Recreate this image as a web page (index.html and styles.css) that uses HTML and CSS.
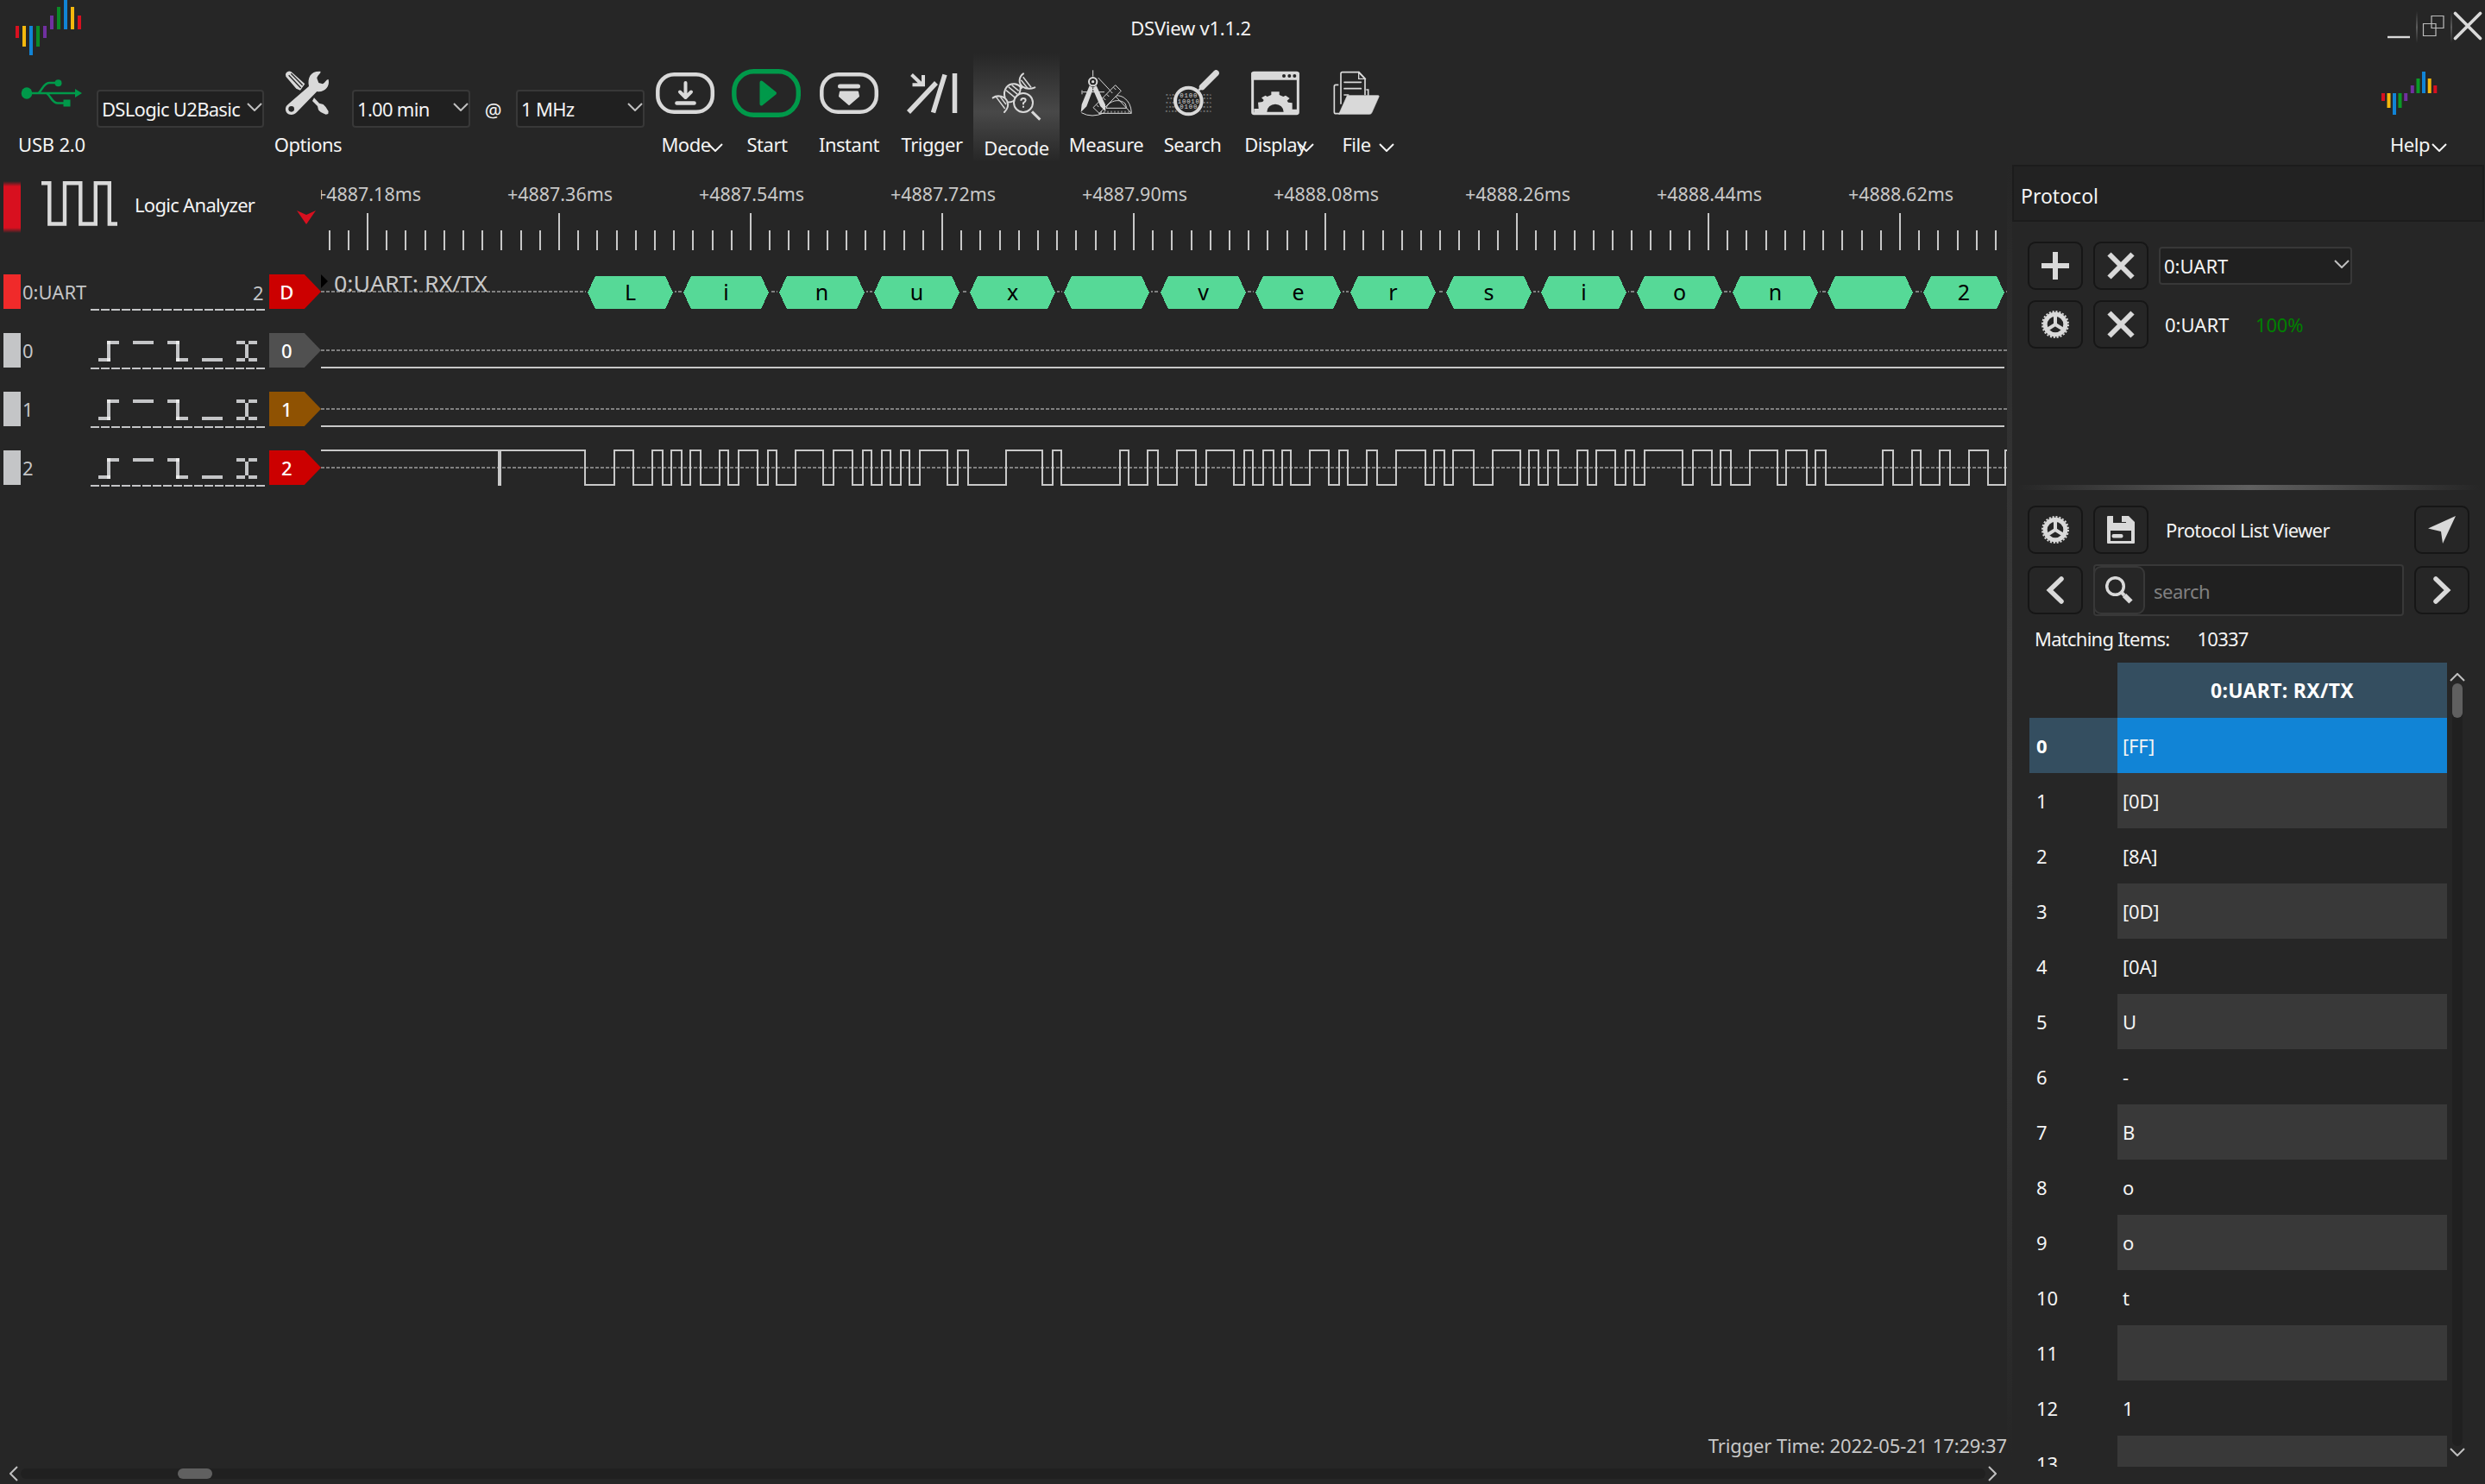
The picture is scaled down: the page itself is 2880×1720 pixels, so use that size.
FILE: index.html
```html
<!DOCTYPE html>
<html lang="en">
<head>
<meta charset="utf-8">
<title>DSView v1.1.2</title>
<link rel="stylesheet" href="styles.css">
</head>
<body>
<header class="titlebar">
  <svg class="app-logo" width="100" height="66" viewBox="0 0 100 66" shape-rendering="crispEdges">
    <path fill="#d8101f" d="M18 30h4v14h-4zM90 18h4v16h-4z"/>
    <path fill="#f5b80d" d="M26 30h4v24h-4zM82 8h4v26h-4z"/>
    <path fill="#1184d6" d="M34 30h4v34h-4zM74 0h4v34h-4z"/>
    <path fill="#0a8a26" d="M42 30h4v24h-4zM66 8h4v26h-4z"/>
    <path fill="#7030a0" d="M50 30h4v14h-4zM58 18h4v16h-4z"/>
  </svg>
  <h1 class="title">DSView v1.1.2</h1>
  <div class="window-controls">
    <svg width="120" height="60" viewBox="2760 0 120 60" fill="none" stroke="#d9d9d9">
      <defs><linearGradient id="sep" x1="0" y1="0" x2="0" y2="1"><stop offset="0" stop-color="#262626"/><stop offset=".5" stop-color="#5c5c5c"/><stop offset="1" stop-color="#262626"/></linearGradient></defs>
      <path d="M2767 43h26" stroke-width="2.4"/>
      <path d="M2808.500 27.500h14.500v14h-14.500zM2818 18.500h14v14h-14z" stroke="#bdbdbd" stroke-width="1.200"/>
      <path d="M2845.500 15.500l29 29M2874.500 15.500l-29 29" stroke-width="3.800" stroke-linecap="round"/>
      <path d="M2800 13h2v37h-2zM2840 13h2v37h-2z" fill="url(#sep)" stroke="none"/>
    </svg>
  </div>
</header>

<nav class="toolbar">
  <div class="tool tool-usb">
    <svg width="104" height="72" viewBox="8 72 104 72" fill="none" stroke="#00994a" stroke-width="2.600">
      <ellipse cx="31" cy="108" rx="6.300" ry="6.700" fill="#00994a" stroke="none"/>
      <path d="M31 108H90M44 108C48 107 50 96 57 96H66M54 108C60 112 60 119.500 67 119.500H75"/>
      <path d="M87 103l8 5-8 5zM73.500 115.500h8v8h-8z" fill="#00994a" stroke="none"/>
      <circle cx="67.500" cy="96.300" r="4" fill="#00994a" stroke="none"/>
    </svg>
    <span>USB 2.0</span>
  </div>
  <div class="combo combo-device"><span>DSLogic U2Basic</span><svg class="arrow" width="18" height="10" viewBox="0 0 18 10"><path d="M1 1l8 8 8-8"/></svg></div>
  <div class="tool tool-options">
    <svg width="102" height="72" viewBox="18 6 306 216" fill="#d9d9d9">
      <path d="M96 42q10-10 22 2l42 38-16 22-14-6-36-42q-4-8 2-14z"/>
      <path d="M104 52l42 44M112 46l40 40" stroke="#262626" stroke-width="4"/>
      <path d="M174 90C168 60 180 36 214 38C218 44 202 52 202 62L208 78L222 82C232 76 234 66 242 66C248 92 228 112 202 108L132 180C118 196 90 190 93 166Q94 158 102 152Z"/>
      <circle cx="113" cy="169" r="10" fill="#262626"/>
      <path d="M192 130l18 19 14 4q10 8 18 24l-1 9-8 2q-22-8-26-16l-3-13-18-18z"/>
    </svg>
    <span>Options</span>
  </div>
  <div class="combo combo-duration"><span>1.00 min</span><svg class="arrow" width="18" height="10" viewBox="0 0 18 10"><path d="M1 1l8 8 8-8"/></svg></div>
  <span class="at">@</span>
  <div class="combo combo-rate"><span>1 MHz</span><svg class="arrow" width="18" height="10" viewBox="0 0 18 10"><path d="M1 1l8 8 8-8"/></svg></div>
  <div class="tool tool-mode">
    <svg width="94" height="72" viewBox="747 72 94 72" fill="none" stroke="#d9d9d9">
      <rect x="762.300" y="86.300" width="63.500" height="43.500" rx="19" stroke-width="4.500"/>
      <path d="M794.500 96v16M788 106.500l6.500 6.500 6.500-6.500" stroke-width="4" stroke-linecap="round" stroke-linejoin="round"/>
      <path d="M784.500 119.500h20" stroke-width="4.600" stroke-linecap="round"/>
    </svg>
    <span>Mode</span>
    <svg class="arrow arrow-menu" width="18" height="10" viewBox="0 0 18 10"><path d="M1 1l8 8 8-8"/></svg>
  </div>
  <div class="tool tool-start">
    <svg width="94" height="72" viewBox="841 72 94 72">
      <rect x="850.800" y="82.800" width="74.500" height="50.500" rx="23" fill="none" stroke="#00994a" stroke-width="5.400"/>
      <path d="M882.500 95.500l15.500 12.500-15.500 12.500z" fill="#00994a" stroke="#00994a" stroke-width="4" stroke-linejoin="round"/>
    </svg>
    <span>Start</span>
  </div>
  <div class="tool tool-instant">
    <svg width="98" height="72" viewBox="935 72 98 72" fill="#d9d9d9">
      <rect x="952.300" y="86.300" width="63.500" height="43.500" rx="19" fill="none" stroke="#d9d9d9" stroke-width="4.500"/>
      <rect x="971" y="97.500" width="26" height="5" rx="2.500"/>
      <path d="M974 106.500h20l1 5-11 9.500-11-9.500z" stroke="#d9d9d9" stroke-width="2" stroke-linejoin="round"/>
    </svg>
    <span>Instant</span>
  </div>
  <div class="tool tool-trigger">
    <svg width="94" height="72" viewBox="1033 72 94 72" fill="none" stroke="#d9d9d9">
      <path d="M1056.500 86.500l12 11.500M1057.500 98.300h12.500V87" stroke-width="4"/>
      <path d="M1053 130l32-34M1081.500 130.500l13.500-44M1106.500 85v46" stroke-width="5.500"/>
    </svg>
    <span>Trigger</span>
  </div>
  <div class="tool tool-decode">
    <svg width="100" height="72" viewBox="24 48 300 216" fill="none" stroke="#d9d9d9" stroke-width="6">
      <path d="M92 160C110 148 134 156 142 172Q150 192 132 210M134 160C126 130 144 110 168 112Q182 114 192 126M142 176Q172 176 182 150Q190 134 188 112M198 76C184 86 178 108 196 122Q214 134 238 124" stroke-linecap="round"/>
      <path d="M104 158l30 40M118 157l20 26M138 134l32 26M146 122l32 26M158 116l24 20M190 98l24 30M197 88l28 36" stroke-width="4.500"/>
      <circle cx="198" cy="177" r="33" fill="#3c3c3c"/>
      <path d="M190 170q0-8 8-8t8 7q0 5-8 9v6M198 188v6" stroke-width="6"/>
      <path d="M228 208l28 28" stroke-width="9"/>
    </svg>
    <span>Decode</span>
  </div>
  <div class="tool tool-measure">
    <svg width="108" height="72" viewBox="324 36 324 216" fill="none" stroke="#d9d9d9" stroke-width="3">
      <path d="M458 90L574 214H460M468 214C470 160 520 140 548 160Q572 176 574 212M486 196C494 172 530 160 552 180Q556 188 556 196ZM440 64v22"/>
      <path d="M480 212v-6M492 212v-6M504 212v-6M516 212v-6M528 212v-6M540 212v-6M552 212v-6M564 212v-6" stroke-width="2.500"/>
      <path d="M518 116L538 136L462 214L441 194Z" fill="#262626"/>
      <path d="M512 124l8 8M500 136l8 8M488 148l8 8M476 160l8 8M464 172l8 8M452 184l8 8" />
      <path d="M400 212Q436 232 480 212M402 134v14M404 140h76"/>
      <circle cx="440" cy="104" r="14" stroke-width="6"/>
      <circle cx="440" cy="104" r="5" fill="#d9d9d9" stroke="none"/>
      <path d="M428 118l14 8-24 64-20 20 3-27zM452 118l-14 8 28 64 18 18-1-24z" fill="#d9d9d9" stroke="none"/>
    </svg>
    <span>Measure</span>
  </div>
  <div class="tool tool-search">
    <svg width="92" height="72" viewBox="648 36 276 216">
      <g class="bits">
        <text x="694" y="153" textLength="158">010010100101001</text>
        <text x="698" y="165" textLength="154">001001010010010</text>
        <text x="694" y="180" textLength="158">010010100101001</text>
        <text x="694" y="195" textLength="158">100100101001010</text>
        <text x="692" y="209" textLength="160">010010100101001</text>
      </g>
      <circle cx="772" cy="171" r="46" fill="#262626" stroke="#d9d9d9" stroke-width="12"/>
      <g class="bits bits-lens">
        <text x="742" y="159" textLength="60">0100</text>
        <text x="734" y="179" textLength="76">10010</text>
        <text x="742" y="199" textLength="60">0100</text>
      </g>
      <path d="M808 134l10-10" stroke="#d9d9d9" stroke-width="8"/>
      <path d="M820 122l48-48" stroke="#d9d9d9" stroke-width="21" stroke-linecap="round"/>
    </svg>
    <span>Search</span>
  </div>
  <div class="tool tool-display">
    <svg width="100" height="72" viewBox="924 36 300 216">
      <rect x="995" y="73" width="158" height="142" rx="5" fill="none" stroke="#d9d9d9" stroke-width="9"/>
      <path d="M991 72h166v26H991z" fill="#d9d9d9"/>
      <circle cx="1104" cy="84" r="6" fill="#262626"/><circle cx="1123" cy="84" r="6" fill="#262626"/><circle cx="1141" cy="84" r="6" fill="#262626"/>
      <path d="M1000 198h16l-2-22 16-2 4-6-8-8 14-8 6 4 14-6V139h28v11l14 6 8-4 14 10-9 8 4 6 14 2v22h16v16H1000z" fill="#d9d9d9"/>
      <path d="M1045 209a29 27 0 0 1 58 0z" fill="#262626"/>
    </svg>
    <span>Display</span>
    <svg class="arrow arrow-menu" width="18" height="10" viewBox="0 0 18 10"><path d="M1 1l8 8 8-8"/></svg>
  </div>
  <div class="tool tool-file">
    <svg width="88" height="72" viewBox="1224 36 264 216" fill="none" stroke="#d9d9d9" stroke-width="5">
      <path d="M1294 115h-10q-5 0-5 6v88q0 6 6 6h14M1390 132h7v20"/>
      <path d="M1302 182V76q0-5 5-5h58l21 22v58"/>
      <path d="M1364 72v22h22z" stroke-width="4"/>
      <path d="M1314 106h58M1314 128h58M1314 150h14" stroke-linecap="round"/>
      <path d="M1324 152h108q4 0 2 5l-24 54q-2 6-8 6H1295z" fill="#d9d9d9" stroke-width="2"/>
    </svg>
    <span>File</span>
    <svg class="arrow arrow-menu" width="18" height="10" viewBox="0 0 18 10"><path d="M1 1l8 8 8-8"/></svg>
  </div>
  <div class="tool tool-help">
    <svg width="110" height="72" viewBox="2738 72 110 72" stroke-width="4">
      <path stroke="#d8101f" d="M2762 108v9M2822.300 99v9"/>
      <path stroke="#f5b80d" d="M2768.500 108v17M2815.700 91v17"/>
      <path stroke="#1184d6" d="M2775 108v25M2809 83v25"/>
      <path stroke="#0a9a26" d="M2781.500 108v17M2802.500 91v17"/>
      <path stroke="#7030a0" d="M2788.200 108v9M2795.800 99v9"/>
    </svg>
    <span>Help</span>
    <svg class="arrow arrow-menu" width="18" height="10" viewBox="0 0 18 10"><path d="M1 1l8 8 8-8"/></svg>
  </div>
</nav>

<div class="workspace">
  <main class="view">
    <div class="scope">
      <div class="headers">
        <div class="device-row">
          <i class="device-mark"></i>
          <svg class="device-icon" width="88" height="56" viewBox="48 208 88 56" fill="none" stroke="#d9d9d9" stroke-width="4.400"><path d="M48 212.300H57.300V259.500H75V212.300H93.300V259.500H110.800V212.300H126.800V259.500H136"/></svg>
          <span class="device-name">Logic Analyzer</span>
          <svg class="trigger-mark" width="22" height="16" viewBox="0 0 22 16"><path fill="#d8101f" d="M0 0l11 5 11-5-11 16z"/></svg>
        </div>
        <div class="channel">
          <i class="swatch swatch-decode"></i><span class="name">0:UART</span>
          <div class="triggers"><span class="source">2</span></div>
          <b class="badge badge-red">D</b>
        </div>
        <div class="channel">
          <i class="swatch"></i><span class="name">0</span>
          <div class="triggers"><svg width="202" height="24" viewBox="105 394 202 24"><use href="#edges"/></svg></div>
          <b class="badge badge-grey">0</b>
        </div>
        <div class="channel">
          <i class="swatch"></i><span class="name">1</span>
          <div class="triggers"><svg width="202" height="24" viewBox="105 394 202 24"><use href="#edges"/></svg></div>
          <b class="badge badge-brown">1</b>
        </div>
        <div class="channel">
          <i class="swatch"></i><span class="name">2</span>
          <div class="triggers"><svg width="202" height="24" viewBox="105 394 202 24">
            <g id="edges" fill="#c4c5c7" shape-rendering="crispEdges">
              <path d="M114 414h14v4h-14zM124 394h4v24h-4zM124 394h14v4h-14zM154 394h24v4h-24zM194 394h14v4h-14zM204 394h4v24h-4zM204 414h14v4h-14zM234 414h24v4h-24zM274 394h10v4h-10zM288 394h10v4h-10zM274 414h10v4h-10zM288 414h10v4h-10zM284 398h4v16h-4z"/>
              <path fill="#ebebeb" d="M124 394h4v4h-4zM124 414h4v4h-4zM204 394h4v4h-4zM204 414h4v4h-4z"/>
            </g></svg></div>
          <b class="badge badge-red">2</b>
        </div>
      </div>
      <svg id="plot" class="plot" width="1954" height="1462" viewBox="372 190 1954 1462"></svg>
    </div>
    <p class="trigger-time">Trigger Time: 2022-05-21 17:29:37</p>
    <div class="hscroll">
      <svg class="arrow" width="10" height="18" viewBox="0 0 10 18"><path d="M9 1L1 9l8 8"/></svg>
      <div class="track"><i class="thumb"></i></div>
      <svg class="arrow" width="10" height="18" viewBox="0 0 10 18"><path d="M1 1l8 8-8 8"/></svg>
    </div>
  </main>
  <div class="vsplit"></div>
  <aside class="dock">
    <h2 class="dock-title">Protocol</h2>
    <section class="decoders">
      <div class="row">
        <button class="btn"><svg width="32" height="32" viewBox="0 0 32 32"><path d="M13 0h6v13h13v6H19v13h-6V19H0v-6h13z"/></svg></button>
        <button class="btn"><svg width="32" height="32" viewBox="0 0 32 32"><path class="line" d="M2.500 2.500l27 27M29.500 2.500l-27 27" stroke-width="6"/></svg></button>
        <div class="combo combo-decoder"><span>0:UART</span><svg class="arrow" width="18" height="10" viewBox="0 0 18 10"><path d="M1 1l8 8 8-8"/></svg></div>
      </div>
      <div class="row">
        <button class="btn"><svg width="32" height="32" viewBox="0 0 32 32"><g id="gear"><circle class="line" cx="16" cy="16" r="15" stroke-width="2" stroke-dasharray="2.100 1.827"/><circle class="line" cx="16" cy="16" r="11.800" stroke-width="5"/><path class="line" d="M16 5v11l-9.500 6M16 16l9.500 6" stroke-width="4"/></g></svg></button>
        <button class="btn"><svg width="32" height="32" viewBox="0 0 32 32"><path class="line" d="M2.500 2.500l27 27M29.500 2.500l-27 27" stroke-width="6"/></svg></button>
        <span class="decoder-name">0:UART</span><span class="progress">100%</span>
      </div>
    </section>
    <div class="hsplit"></div>
    <section class="list-viewer">
      <div class="row">
        <button class="btn"><svg width="32" height="32" viewBox="0 0 32 32"><use href="#gear"/></svg></button>
        <button class="btn"><svg width="32" height="32" viewBox="0 0 32 32"><path fill-rule="evenodd" d="M0 1q0-1 1-1h6v8h15V0h3l7 7v24q0 1-1 1H1q-1 0-1-1zM4 17v12h24V17zM17 0h5v7h-5z"/><rect x="5.500" y="21" width="13" height="4.500" rx="2"/></svg></button>
        <span class="viewer-title">Protocol List Viewer</span>
        <button class="btn btn-end"><svg width="32" height="32" viewBox="0 0 32 32"><path d="M32 0L17 32 15 18 0 14.500z"/></svg></button>
      </div>
      <div class="row">
        <button class="btn"><svg width="32" height="32" viewBox="0 0 32 32"><path class="line" d="M23 3L9.500 16 23 29" stroke-width="5.500" stroke-linecap="round"/></svg></button>
        <div class="search">
          <button class="btn btn-search"><svg width="32" height="32" viewBox="0 0 32 32"><circle class="line" cx="11.500" cy="11.500" r="9.800" stroke-width="3.500"/><path class="line" d="M19 19l3 3" stroke-width="4"/><path class="line" d="M22 22l7.500 7.500" stroke-width="6"/></svg></button>
          <span class="placeholder">search</span>
        </div>
        <button class="btn btn-end"><svg width="32" height="32" viewBox="0 0 32 32"><path class="line" d="M9 3l13.500 13L9 29" stroke-width="5.500" stroke-linecap="round"/></svg></button>
      </div>
      <p class="matching"><span>Matching Items:</span><span class="count">10337</span></p>
      <div class="list">
        <div class="grid">
          <span></span><b class="head">0:UART: RX/TX</b>
          <b class="idx idx-selected">0</b><span class="cell cell-selected">[FF]</span>
          <span class="idx">1</span><span class="cell alt">[0D]</span>
          <span class="idx">2</span><span class="cell">[8A]</span>
          <span class="idx">3</span><span class="cell alt">[0D]</span>
          <span class="idx">4</span><span class="cell">[0A]</span>
          <span class="idx">5</span><span class="cell alt">U</span>
          <span class="idx">6</span><span class="cell">-</span>
          <span class="idx">7</span><span class="cell alt">B</span>
          <span class="idx">8</span><span class="cell">o</span>
          <span class="idx">9</span><span class="cell alt">o</span>
          <span class="idx">10</span><span class="cell">t</span>
          <span class="idx">11</span><span class="cell alt"></span>
          <span class="idx">12</span><span class="cell">1</span>
          <span class="idx">13</span><span class="cell alt"></span>
        </div>
        <div class="vscroll">
          <svg class="arrow" width="18" height="10" viewBox="0 0 18 10"><path d="M1 9l8-8 8 8"/></svg>
          <div class="track"><i class="thumb"></i></div>
          <svg class="arrow" width="18" height="10" viewBox="0 0 18 10"><path d="M1 1l8 8 8-8"/></svg>
        </div>
      </div>
    </section>
  </aside>
</div>
<script src="app.js"></script>
</body>
</html>
```
FILE: styles.css
```css
* { box-sizing: border-box; }

body {
  margin: 0;
  width: 2880px;
  height: 1720px;
  overflow: hidden;
  display: flex;
  flex-direction: column;
  background: #262626;
  color: #f4f4f4;
  font: 22px/32px "Noto Sans", sans-serif;
  letter-spacing: -0.5px;
}

svg { display: block; flex: none; }
h1, h2, p { margin: 0; font-weight: 400; font-size: inherit; }
.arrow { fill: none; stroke: #c0c0c0; stroke-width: 2; }

/* title bar */
.titlebar { height: 60px; display: flex; justify-content: space-between; }
.app-logo { width: 100px; height: 66px; }
.title { margin-top: 16px; padding-right: 100px; letter-spacing: -0.25px; }

/* toolbar */
.toolbar { height: 130px; display: flex; padding-left: 8px; white-space: nowrap; }
.tool {
  display: grid;
  grid-template-rows: 72px 32px;
  row-gap: 7px;
  justify-items: center;
  align-content: start;
  padding-top: 12px;
  position: relative;
}
.tool-usb { width: 104px; letter-spacing: -0.2px; }
.tool-options { width: 102px; }
.tool-mode, .tool-start, .tool-trigger { width: 94px; }
.tool-mode span { padding-left: 2px; }
.tool-start span { padding-left: 2px; }
.tool-instant { width: 98px; }
.tool-decode {
  width: 100px;
  margin-left: 1px;
  padding-top: 16px;
  background: linear-gradient(#262626 2px, #484848 70px, #262626 128px);
}
.tool-measure { width: 108px; }
.tool-search { width: 92px; }
.tool-display { width: 100px; }
.tool-file { width: 88px; }
.tool-help { width: 110px; margin-left: auto; margin-right: 32px; }
.arrow-menu { position: absolute; top: 106px; stroke: #f4f4f4; }
.tool-mode .arrow-menu { left: 73px; }
.tool-display .arrow-menu { left: 77px; }
.tool-file .arrow-menu { left: 70px; }
.tool-help .arrow-menu { left: 80px; }
.at { width: 53px; text-align: center; margin-top: 51px; }

.combo {
  height: 44px;
  display: flex;
  align-items: center;
  justify-content: space-between;
  padding: 0 0 0 4px;
  border: 2px solid #383838;
  border-radius: 4px;
  background: #202020;
}
.combo .arrow { margin-top: -4px; }
.toolbar .combo { margin-top: 44px; letter-spacing: -0.7px; }
.combo-device { width: 194px; }
.combo-duration { width: 137px; }
.combo-rate { width: 149px; }
.combo-decoder { width: 224px; letter-spacing: 0; }
.combo-decoder .arrow { margin-right: 1px; }

/* workspace */
.workspace { flex: 1; display: flex; min-height: 0; }
.view { width: 2326px; display: flex; flex-direction: column; }
.scope { display: flex; height: 1462px; }
.headers { width: 372px; color: #c4c5c7; }

.device-row { height: 114px; display: flex; padding-left: 4px; color: #f4f4f4; }
.device-mark {
  width: 20px; height: 60px; margin-top: 20px;
  background: linear-gradient(#262626, #d8101f 6px, #d8101f 54px, #262626);
}
.device-icon { margin: 18px 0 0 24px; }
.device-name { margin: 31px 0 0 20px; width: 188px; letter-spacing: -0.7px; }
.trigger-mark { margin-top: 54px; }

.channel { height: 68px; display: flex; align-items: center; }
.swatch { width: 20px; height: 40px; margin-left: 4px; background: #c4c5c7; }
.swatch-decode { background: #f02a2a; }
.name { width: 81px; padding-left: 2px; letter-spacing: 0; }
.triggers {
  width: 202px; height: 42px; margin-top: 2px;
  display: flex; align-items: flex-start; justify-content: flex-end;
  padding-top: 9px;
  background: repeating-linear-gradient(90deg, #c4c5c7 0 10px, transparent 10px 12px) bottom / 100% 2px no-repeat;
}
.source { margin-top: -4px; padding-right: 2px; }
.badge {
  width: 60px; height: 40px; margin-left: 5px;
  padding-right: 20px;
  line-height: 40px;
  text-align: center;
  font-weight: 500;
  color: #fff;
  clip-path: polygon(0 0, 68% 0, 100% 50%, 68% 100%, 0 100%);
}
.badge-red { background: #cc0000; }
.badge-grey { background: #505050; }
.badge-brown { background: #8f5202; }

.plot { letter-spacing: 0; }
.ruler-label { fill: #c8c8c8; font-size: 22px; text-anchor: middle; }
.row-title { fill: #c8c8c8; font-size: 25px; }
.byte { fill: #000; font-size: 25px; text-anchor: middle; }
.bits { fill: #a8a8a8; font: 11px "Liberation Mono", monospace; letter-spacing: 0; }
.bits-lens { fill: #d9d9d9; font-size: 22px; }

.trigger-time { text-align: right; height: 32px; margin-top: 7px; color: #c8c8c8; letter-spacing: -0.13px; }
.hscroll { display: flex; align-items: center; gap: 3px; padding: 8px 12px 0 11px; }
.hscroll .track { flex: 1; height: 12px; border-radius: 6px; background: #202020; padding-left: 182px; }
.hscroll .thumb { display: block; width: 40px; height: 12px; border-radius: 6px; background: #606060; }

.vsplit { width: 6px; background: linear-gradient(#262626 0, #424242 50%, #262626 98%); }

/* protocol dock */
.dock { width: 548px; display: flex; flex-direction: column; }
.dock-title {
  width: 547px; height: 66px; margin-top: 1px;
  padding: 4px 0 0 8px;
  border: 2px solid #1c1c1c;
  background: #222;
  font-size: 23px;
  line-height: 60px;
  letter-spacing: 0;
}
.decoders { height: 305px; padding: 23px 18px 0; display: flex; flex-direction: column; gap: 12px; }
.row { display: flex; align-items: center; gap: 12px; }
.btn {
  width: 64px; height: 56px; padding: 0;
  display: grid; place-items: center;
  border: 2px solid #161616;
  border-radius: 9px;
  background: #262626;
}
.btn svg { fill: #d9d9d9; }
.line { fill: none; stroke: #d9d9d9; }
.btn-end { margin-left: auto; }
.decoder-name { width: 84px; padding-left: 7px; letter-spacing: 0; }
.progress { color: #008000; padding-left: 16px; letter-spacing: -0.2px; }
.hsplit { height: 6px; background: linear-gradient(90deg, #262626 1%, #606060 50%, #262626 99%); }

.list-viewer { flex: 1; padding: 18px 18px 0; display: flex; flex-direction: column; gap: 12px; }
.viewer-title { padding-left: 8px; letter-spacing: -0.65px; }
.search {
  width: 360px; height: 60px;
  display: flex; align-items: center;
  border: 2px solid #383838;
  border-radius: 4px;
  background: #202020;
}
.btn-search { width: 60px; border-color: #383838; margin-left: -2px; }
.placeholder { color: #808080; padding: 2px 0 0 10px; }
.matching { display: flex; gap: 32px; padding-left: 8px; margin-top: -2px; letter-spacing: -0.75px; }
.list { display: flex; height: 932px; }
.grid {
  width: 484px; margin-left: 2px;
  display: grid;
  grid-template-columns: 102px 382px;
  grid-auto-rows: 64px;
  line-height: 65px;
  letter-spacing: -0.2px;
  overflow: hidden;
}
.head { background: #344e60; text-align: center; color: #fff; font-size: 23px; line-height: 64px; letter-spacing: 0.3px; }
.idx { padding-left: 8px; }
.idx-selected { background: #344e60; color: #fff; }
.cell { padding-left: 6px; }
.alt { background: #393939; }
.cell-selected { background: #1184d6; }
.vscroll { display: flex; flex-direction: column; align-items: center; width: 18px; margin-left: 3px; padding: 12px 0; gap: 2px; }
.vscroll .track { flex: 1; width: 12px; border-radius: 6px; background: #202020; }
.vscroll .thumb { display: block; width: 12px; height: 40px; border-radius: 6px; background: #606060; }
```
FILE: app.js
```js
const SVG = 'http://www.w3.org/2000/svg';
const plot = document.getElementById('plot');

function add(name, attrs, text) {
  const el = document.createElementNS(SVG, name);
  for (const key in attrs) el.setAttribute(key, attrs[key]);
  if (text) el.textContent = text;
  plot.appendChild(el);
}

// time ruler
const labels = ['+4887.18ms', '+4887.36ms', '+4887.54ms', '+4887.72ms', '+4887.90ms',
  '+4888.08ms', '+4888.26ms', '+4888.44ms', '+4888.62ms'];
let ticks = '';
for (let i = -2; i <= 85; i++) {
  const x = Math.round(425 + i * 22.2);
  ticks += `M${x} ${i % 10 === 0 ? 247 : 267}h2V290h-2z`;
}
add('path', { d: ticks, fill: '#c8c8c8', 'shape-rendering': 'crispEdges' });
labels.forEach((t, i) => add('text', {
  class: 'ruler-label', x: 427 + i * 222, y: 232.5, textLength: 122, lengthAdjust: 'spacingAndGlyphs'
}, t));

// centre guides
for (const y of [338, 406, 474, 542]) {
  add('path', { d: `M372 ${y}H2326`, stroke: '#808080', 'stroke-width': 2, 'stroke-dasharray': '4 2' });
}

// decoded bytes
add('path', { d: 'M372 318l8 8-8 8z', fill: '#000' });
add('text', { class: 'row-title', x: 387, y: 337.5, textLength: 178, lengthAdjust: 'spacingAndGlyphs' }, '0:UART: RX/TX');
const bytes = 'Linux version 2';
const starts = [681, 792, 903, 1013, 1124, 1233, 1345, 1455, 1565, 1676, 1786, 1897, 2008, 2118, 2229];
starts.forEach((x, i) => {
  const end = Math.min(x + 99, 2323);
  add('path', { d: `M${x - 2} 335h${end - x + 4}v6H${x - 2}z`, fill: '#262626' });
  add('path', {
    d: `M${x} 339L${x + 9} 320H${end - 9}L${end} 339L${end - 9} 358H${x + 9}Z`,
    fill: '#56d997', 'shape-rendering': 'crispEdges'
  });
  if (bytes[i] !== ' ') add('text', { class: 'byte', x: (x + end) / 2, y: 347.5 }, bytes[i]);
});

// channels 0 and 1 stay low
for (const y of [426, 494]) add('path', { d: `M372 ${y}H2323`, stroke: '#c8c8c8', 'stroke-width': 2 });

// channel 2: x of every level change, starting high
const edges = [678, 712, 734, 756, 768, 778, 790, 800, 812, 834, 844, 856, 878, 890, 900, 922, 954, 966,
  988, 1000, 1010, 1022, 1032, 1044, 1054, 1066, 1098, 1110, 1122, 1166, 1208, 1220, 1230, 1298, 1308,
  1330, 1342, 1364, 1386, 1398, 1430, 1442, 1452, 1464, 1476, 1486, 1496, 1518, 1540, 1552, 1562, 1584,
  1596, 1618, 1652, 1662, 1674, 1684, 1708, 1730, 1762, 1772, 1783, 1794, 1806, 1828, 1840, 1850, 1872,
  1884, 1894, 1906, 1950, 1962, 1984, 1994, 2006, 2028, 2060, 2070, 2094, 2104, 2116, 2182, 2194, 2216,
  2226, 2248, 2260, 2282, 2304, 2324];
let wave = 'M372 522';
let high = true;
for (const x of edges) {
  high = !high;
  wave += `H${x}V${high ? 522 : 562}`;
}
add('path', { d: wave + 'H2326', fill: 'none', stroke: '#c8c8c8', 'stroke-width': 2 });
add('path', { d: 'M577 521h4v42h-4z', fill: '#c8c8c8' });
```
